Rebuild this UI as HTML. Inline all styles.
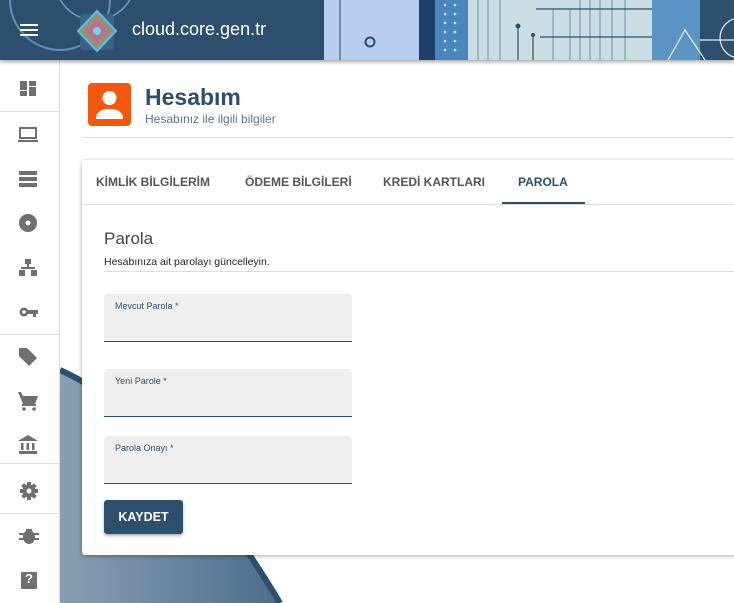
<!DOCTYPE html><html><head><meta charset="utf-8"><style>
*{margin:0;padding:0;box-sizing:border-box}
body{width:734px;height:603px;overflow:hidden;background:#fff;font-family:"Liberation Sans",sans-serif;position:relative}
.hdr{position:absolute;left:0;top:0;width:734px;height:60px;background:#2c4f6e;overflow:hidden;box-shadow:0 2px 4px rgba(0,0,0,.35);z-index:5}
.side{position:absolute;left:0;top:60px;width:60px;height:543px;background:#fff;border-right:1px solid #ddd;z-index:3}
.sep{position:absolute;left:0;width:60px;height:1px;background:#ddd}
.card{position:absolute;left:82px;top:160px;width:660px;height:395px;background:#fff;box-shadow:0 1px 4px rgba(0,0,0,.35);border-radius:3px;z-index:2}
.tab{position:absolute;top:15px;font-size:12px;font-weight:bold;color:#555;letter-spacing:0}
.fld{position:absolute;left:22px;width:248px;height:48px;background:#efefef;border-bottom:1px solid #2c4f6e;border-radius:4px 4px 0 0}
.fld span{position:absolute;left:11px;top:7px;font-size:9px;color:#34506c}
</style></head><body>
<div class="hdr">
 <svg width="734" height="60" style="position:absolute;left:0;top:0">
  <circle cx="60" cy="0" r="50" fill="none" stroke="#5f8fb5" stroke-width="2"/>
  <circle cx="95" cy="-20" r="40" fill="none" stroke="#6e9cc0" stroke-width="1.5"/>
  <rect x="315" y="0" width="12" height="60" fill="#2c4f6e"/>
  <rect x="324" y="0" width="95" height="60" fill="#b9cdee"/>
  <line x1="340" y1="0" x2="340" y2="60" stroke="#2c4f6e" stroke-width="1"/>
  <circle cx="370" cy="42" r="4.5" fill="none" stroke="#2c4f6e" stroke-width="2"/>
  <rect x="419" y="0" width="16" height="60" fill="#1f3e68"/>
  <rect x="435" y="0" width="33" height="60" fill="#4a86bd"/>
  <g fill="#cfe0f0"><circle cx="445" cy="5" r="1.3"/><circle cx="455" cy="5" r="1.3"/><circle cx="445" cy="14" r="1.3"/><circle cx="455" cy="14" r="1.3"/><circle cx="445" cy="23" r="1.3"/><circle cx="455" cy="23" r="1.3"/><circle cx="445" cy="32" r="1.3"/><circle cx="455" cy="32" r="1.3"/><circle cx="445" cy="41" r="1.3"/><circle cx="455" cy="41" r="1.3"/><circle cx="445" cy="50" r="1.3"/><circle cx="455" cy="50" r="1.3"/></g>
  <rect x="468" y="0" width="184" height="60" fill="#c9dde3"/>
  <g stroke="#6d8ea6" stroke-width="1"><line x1="478" y1="0" x2="478" y2="60"/><line x1="488" y1="0" x2="488" y2="60"/><line x1="500" y1="0" x2="500" y2="60"/><line x1="553" y1="10" x2="553" y2="60"/><line x1="570" y1="10" x2="570" y2="60"/><line x1="580" y1="0" x2="580" y2="60"/><line x1="590" y1="0" x2="590" y2="60"/><line x1="600" y1="0" x2="600" y2="60"/><line x1="612" y1="0" x2="612" y2="60"/><line x1="625" y1="0" x2="625" y2="60"/></g>
  <g stroke="#2c4f6e" stroke-width="1.2"><line x1="536" y1="9" x2="665" y2="9"/><line x1="540" y1="37" x2="665" y2="37"/><line x1="518" y1="27" x2="518" y2="60"/><line x1="533" y1="37" x2="533" y2="60"/></g>
  <circle cx="518" cy="26" r="2.5" fill="#2c4f6e"/><circle cx="533" cy="35" r="2" fill="#2c4f6e"/>
  <rect x="652" y="0" width="48" height="60" fill="#5b93c4"/>
  <rect x="700" y="0" width="34" height="60" fill="#2c4f6e"/>
  <path d="M668 60 L685 30 L705 60 M700 40 L734 40" stroke="#e8f0f8" fill="none" stroke-width="1.2"/>
  <circle cx="740" cy="38" r="20" fill="none" stroke="#e8f0f8" stroke-width="1.2"/>
  <g fill="#fff"><rect x="20" y="24" width="18" height="2"/><rect x="20" y="29" width="18" height="2"/><rect x="20" y="34" width="18" height="2"/></g>
  <rect x="80" y="14" width="34" height="36" rx="4" fill="#3a5f8a"/>
  <path d="M97 11 L116 31 L97 51 L78 31 Z" fill="#9a8e7a" stroke="#5ac0e0" stroke-width="2"/>
  <path d="M97 20 L107 31 L97 42 L87 31 Z" fill="#c06b8f"/>
  <circle cx="97" cy="31" r="4" fill="#5fe0f0"/>
 </svg>
 <div style="position:absolute;left:132px;top:19px;color:#fff;font-size:18px">cloud.core.gen.tr</div>
</div>
<svg width="734" height="603" style="position:absolute;left:0;top:0;z-index:1">
 <defs><linearGradient id="g" x1="0" y1="0" x2="1" y2="0"><stop offset="0" stop-color="#8a9fb2"/><stop offset="1" stop-color="#4d6c8c"/></linearGradient></defs>
 <path d="M60 370 Q170 420 280 603 L60 603 Z" fill="url(#g)"/>
 <path d="M60 370 Q170 420 280 603" fill="none" stroke="#2c4f6e" stroke-width="6"/>
</svg>
<div class="side">
 <div class="sep" style="top:51px"></div><div class="sep" style="top:274px"></div><div class="sep" style="top:403px"></div><div class="sep" style="top:453px"></div>
 <svg width="60" height="543" style="position:absolute;left:0;top:0" fill="#6f6f6f">
  <g transform="translate(0,-60)">
  <rect x="20" y="81" width="7" height="9"/><rect x="29" y="81" width="7" height="5"/><rect x="20" y="91" width="7" height="5"/><rect x="29" y="87" width="7" height="9"/>
  <rect x="20" y="128" width="16" height="10" fill="none" stroke="#6f6f6f" stroke-width="2"/><rect x="18" y="140" width="20" height="2"/>
  <rect x="19" y="171" width="18" height="4"/><rect x="19" y="177" width="18" height="4"/><rect x="19" y="183" width="18" height="4"/>
  <circle cx="28" cy="223" r="9"/><circle cx="28" cy="223" r="2.5" fill="#fff"/>
  <rect x="25" y="259" width="6" height="5"/><rect x="27" y="264" width="2" height="4"/><rect x="21" y="267" width="14" height="2"/><rect x="19" y="270" width="6" height="6"/><rect x="31" y="270" width="6" height="6"/>
  <circle cx="24" cy="312" r="4.5"/><circle cx="24" cy="312" r="1.8" fill="#fff"/><rect x="27" y="310" width="11" height="4"/><rect x="33" y="313" width="3" height="4"/>
  <path d="M19 348 L27 348 L37 358 L29 366 L19 356 Z"/>
  <path d="M18 392 L21 392 L23 396 L38 396 L35 404 L23 404 Z"/><rect x="22" y="404" width="14" height="2"/><circle cx="24" cy="409" r="1.8"/><circle cx="34" cy="409" r="1.8"/>
  <path d="M28 435 L38 441 L18 441 Z"/><rect x="21" y="443" width="2.5" height="7"/><rect x="26.5" y="443" width="2.5" height="7"/><rect x="32" y="443" width="2.5" height="7"/><rect x="19" y="451" width="18" height="3"/>
  <g transform="translate(29,491)"><rect x="-2" y="-9" width="4" height="18"/><rect x="-2" y="-9" width="4" height="18" transform="rotate(45)"/><rect x="-2" y="-9" width="4" height="18" transform="rotate(90)"/><rect x="-2" y="-9" width="4" height="18" transform="rotate(135)"/><circle r="6.5"/><circle r="2.5" fill="#fff"/></g>
  <ellipse cx="29" cy="537" rx="6" ry="7"/><rect x="19" y="533" width="20" height="2"/><rect x="19" y="538" width="20" height="2"/><rect x="26" y="529" width="6" height="3"/>
  <rect x="21" y="572" width="16" height="17" rx="1"/>
  </g>
 </svg>
 <div style="position:absolute;left:21px;top:511px;width:16px;text-align:center;color:#fff;font-weight:bold;font-size:13px">?</div>
</div>
<div style="position:absolute;left:88px;top:83px;width:43px;height:43px;background:#f4580f;border-radius:4px;z-index:2">
 <svg width="43" height="43"><circle cx="21.5" cy="15" r="7" fill="#fff"/><path d="M8 36 Q8 26 21.5 26 Q35 26 35 36 Z" fill="#fff"/></svg>
</div>
<div style="position:absolute;left:145px;top:84px;font-size:23px;font-weight:bold;color:#2c4f6e;z-index:2">Hesabım</div>
<div style="position:absolute;left:145px;top:112px;font-size:12px;color:#5a7590;z-index:2">Hesabınız ile ilgili bilgiler</div>
<div style="position:absolute;left:82px;top:137px;width:652px;height:1px;background:#ddd"></div>
<div class="card">
 <div class="tab" style="left:14px">KİMLİK BİLGİLERİM</div>
 <div class="tab" style="left:163px">ÖDEME BİLGİLERİ</div>
 <div class="tab" style="left:301px">KREDİ KARTLARI</div>
 <div class="tab" style="left:436px;color:#2c4f6e">PAROLA</div>
 <div style="position:absolute;left:420px;top:42px;width:83px;height:2px;background:#2c4f6e"></div>
 <div style="position:absolute;left:0;top:44px;width:660px;height:1px;background:#ddd"></div>
 <div style="position:absolute;left:22px;top:69px;font-size:17px;color:#444;font-weight:300">Parola</div>
 <div style="position:absolute;left:22px;top:96px;font-size:10.5px;color:#222">Hesabınıza ait parolayı güncelleyin.</div>
 <div style="position:absolute;left:22px;top:111px;width:638px;height:1px;background:#ddd"></div>
 <div class="fld" style="top:134px"><span>Mevcut Parola *</span></div>
 <div class="fld" style="top:209px"><span>Yeni Parole *</span></div>
 <div class="fld" style="top:276px"><span>Parola Onayı *</span></div>
 <div style="position:absolute;left:22px;top:340px;width:79px;height:34px;background:#2c4f6e;border-radius:3px;color:#fff;font-weight:bold;font-size:12.5px;text-align:center;line-height:34px;box-shadow:0 2px 3px rgba(0,0,0,.3)">KAYDET</div>
</div>
</body></html>
